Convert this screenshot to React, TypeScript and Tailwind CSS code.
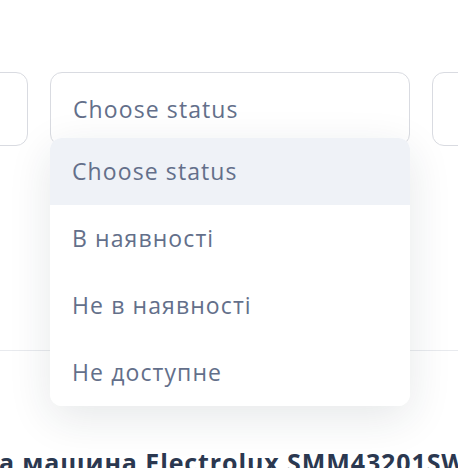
import { useState } from "react";

const options = ["Choose status", "В наявності", "Не в наявності", "Не доступне"];

export default function App() {
  const [active] = useState(0);

  return (
    <div className="w-[458px] h-[468px] overflow-hidden bg-white font-['Open_Sans',sans-serif]">
      <div className="pt-[72px] pl-[2px] flex justify-center gap-[22px]">
        <div className="shrink-0 w-[360px] h-[74px] rounded-xl border border-[#d9dbe1] bg-white" />

        <div className="relative shrink-0 w-[360px]">
          <div className="h-[74px] rounded-xl border border-[#d9dbe1] bg-white flex items-center px-[22px] text-[23px] tracking-[1.1px] text-[#636f8a]">
            Choose status
          </div>

          {/* список статусів */}
          <div className="absolute z-10 left-0 right-0 top-[66px] rounded-xl bg-white overflow-hidden shadow-[0_12px_44px_rgba(30,41,59,0.11)]">
            {options.map((opt, i) => (
              <div
                key={opt}
                className={
                  "h-[67px] flex items-center px-[22px] text-[23px] tracking-[1.1px] text-[#636f8a] " +
                  (i === active ? "bg-[#eff2f7]" : "bg-white")
                }
              >
                {opt}
              </div>
            ))}
          </div>
        </div>

        <div className="shrink-0 w-[360px] h-[74px] rounded-xl border border-[#d9dbe1] bg-white" />
      </div>

      <div className="mt-[204px] border-t border-[#e8eaee]" />

      <div className="flex pt-[99px]">
        <h2 className="shrink-0 ml-[-104px] whitespace-nowrap text-[25px] leading-none font-bold tracking-[0.9px] text-[#2b3850]">
          Пральна машина Electrolux SMM43201SW
        </h2>
      </div>
    </div>
  );
}
